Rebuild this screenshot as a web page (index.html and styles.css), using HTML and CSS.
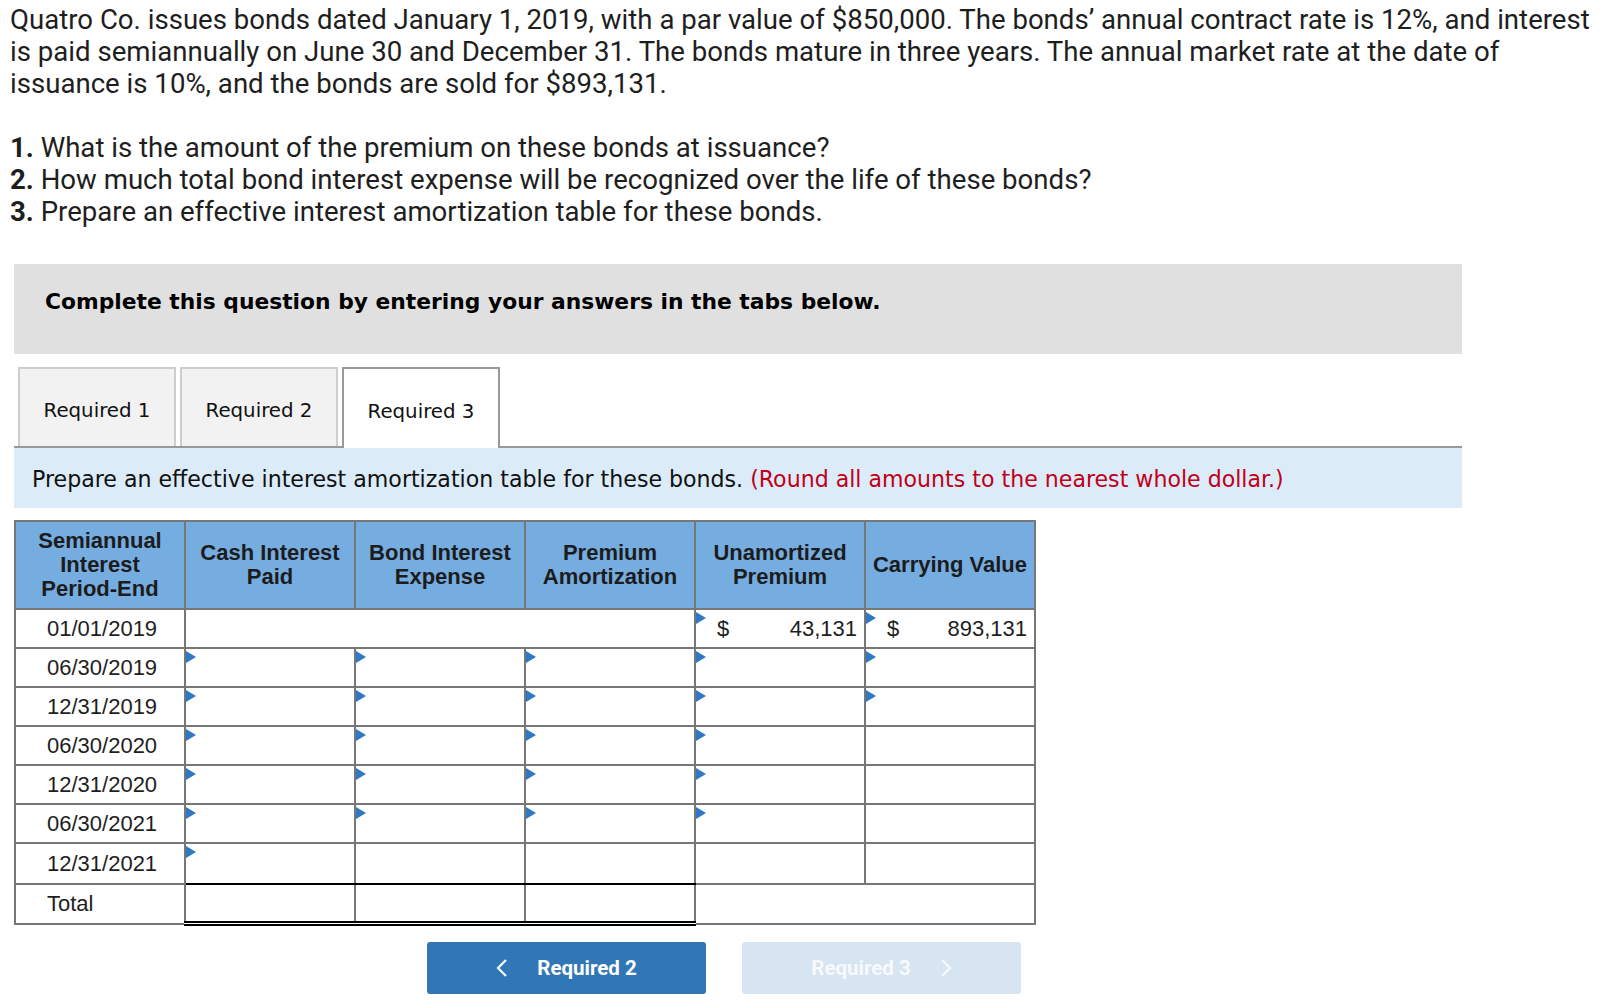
FILE: index.html
```html
<!DOCTYPE html>
<html>
<head>
<meta charset="utf-8">
<title>Quatro Co. Bonds</title>
<link rel="stylesheet" href="styles.css">
</head>
<body>
<div class="question">
  <p>Quatro Co. issues bonds dated January 1, 2019, with a par value of $850,000. The bonds’ annual contract rate is 12%, and interest<br>is paid semiannually on June 30 and December 31. The bonds mature in three years. The annual market rate at the date of<br>issuance is 10%, and the bonds are sold for $893,131.</p>
  <p><b>1.</b> What is the amount of the premium on these bonds at issuance?<br><b>2.</b> How much total bond interest expense will be recognized over the life of these bonds?<br><b>3.</b> Prepare an effective interest amortization table for these bonds.</p>
</div>

<div class="work">
  <div class="banner">Complete this question by entering your answers in the tabs below.</div>

  <div class="tabs">
    <div class="tab">Required 1</div>
    <div class="tab">Required 2</div>
    <div class="tab active">Required 3</div>
  </div>

  <div class="instruct">Prepare an effective interest amortization table for these bonds. <span class="red">(Round all amounts to the nearest whole dollar.)</span></div>

  <table class="amort">
    <colgroup><col><col><col><col><col><col></colgroup>
    <thead>
      <tr>
        <th>Semiannual<br>Interest<br>Period-End</th>
        <th>Cash Interest<br>Paid</th>
        <th>Bond Interest<br>Expense</th>
        <th>Premium<br>Amortization</th>
        <th>Unamortized<br>Premium</th>
        <th>Carrying Value</th>
      </tr>
    </thead>
    <tbody>
      <tr>
        <td class="date">01/01/2019</td>
        <td colspan="3"></td>
        <td class="in"><div class="amt"><span>$</span><span>43,131</span></div></td>
        <td class="in"><div class="amt"><span>$</span><span>893,131</span></div></td>
      </tr>
      <tr>
        <td class="date">06/30/2019</td>
        <td class="in"></td><td class="in"></td><td class="in"></td><td class="in"></td><td class="in"></td>
      </tr>
      <tr>
        <td class="date">12/31/2019</td>
        <td class="in"></td><td class="in"></td><td class="in"></td><td class="in"></td><td class="in"></td>
      </tr>
      <tr>
        <td class="date">06/30/2020</td>
        <td class="in"></td><td class="in"></td><td class="in"></td><td class="in"></td><td></td>
      </tr>
      <tr>
        <td class="date">12/31/2020</td>
        <td class="in"></td><td class="in"></td><td class="in"></td><td class="in"></td><td></td>
      </tr>
      <tr>
        <td class="date">06/30/2021</td>
        <td class="in"></td><td class="in"></td><td class="in"></td><td class="in"></td><td></td>
      </tr>
      <tr class="last">
        <td class="date">12/31/2021</td>
        <td class="in sum"></td><td class="sum"></td><td class="sum"></td><td></td><td></td>
      </tr>
      <tr class="total">
        <td class="date">Total</td>
        <td class="dbl"></td><td class="dbl"></td><td class="dbl"></td><td colspan="2"></td>
      </tr>
    </tbody>
  </table>

  <div class="nav">
    <button class="btn prev"><svg width="12" height="20" viewBox="0 0 12 20"><polyline points="10,2 2,10 10,18" fill="none" stroke="currentColor" stroke-width="2.2"/></svg><span>Required 2</span></button>
    <button class="btn next"><span>Required 3</span><svg width="12" height="20" viewBox="0 0 12 20"><polyline points="2,2 10,10 2,18" fill="none" stroke="currentColor" stroke-width="2.2"/></svg></button>
  </div>
</div>
</body>
</html>
```
FILE: styles.css
```css
html, body {
  margin: 0;
  padding: 0;
  background: #fff;
}

body {
  font-family: Roboto, "Liberation Sans", sans-serif;
  color: #1e1e1e;
}

.question {
  padding: 4px 0 0 10px;
  font-size: 27.6px;
  line-height: 32px;
}

.question p {
  margin: 0 0 32px 0;
  white-space: nowrap;
}

.question p:last-child {
  margin-bottom: 0;
}

.question b {
  font-weight: 700;
}

.work {
  margin: 36px 0 0 14px;
  width: 1448px;
}

.banner {
  background: #e0e0e0;
  height: 90px;
  box-sizing: border-box;
  padding: 24px 0 0 31px;
  font-family: "DejaVu Sans", Verdana, sans-serif;
  font-weight: 700;
  font-size: 21.8px;
  line-height: 28px;
  color: #000;
}

.tabs {
  display: flex;
  gap: 4px;
  margin-top: 13px;
  padding-left: 4px;
  border-bottom: 2px solid #999;
  height: 79px;
}

.tab {
  width: 158px;
  box-sizing: border-box;
  height: 79px;
  border: 2px solid #cdcdcd;
  border-bottom: none;
  background: #f2f2f2;
  display: flex;
  align-items: center;
  justify-content: center;
  padding-top: 6px;
  font-family: "DejaVu Sans", Verdana, sans-serif;
  font-size: 19.8px;
  color: #111;
}

.tab.active {
  background: #fff;
  border-color: #999;
  height: 81px;
  margin-bottom: -2px;
  position: relative;
}

.instruct {
  background: #dbebf8;
  height: 60px;
  box-sizing: border-box;
  padding: 17px 0 0 18px;
  font-family: "DejaVu Sans", Verdana, sans-serif;
  font-size: 22.1px;
  line-height: 28px;
  color: #111;
}

.red {
  color: #c0001a;
}

.amort {
  margin-top: 12px;
  width: 1019px;
  border-collapse: collapse;
  table-layout: fixed;
  border: 2px solid #777;
  font-family: "Liberation Sans", Arial, sans-serif;
  font-size: 22px;
  color: #1e1e1e;
}

.amort col {
  width: 170px;
}

.amort th {
  background: #75ade1;
  border: 2px solid #777;
  height: 86px;
  padding: 0;
  font-weight: 700;
  font-size: 22px;
  line-height: 24px;
  color: #1c1c1c;
  text-align: center;
  vertical-align: middle;
}

.amort td {
  border: 2px solid #777;
  height: 37px;
  padding: 0;
  vertical-align: middle;
  position: relative;
}

.amort td.date {
  padding-left: 31px;
}

.amort tr.last td {
  height: 39px;
}

.amort tr.total td {
  height: 36px;
}

.amort td.sum {
  border-bottom: 2px solid #000;
}

.amort td.dbl {
  border-bottom: 5px double #000;
}

.amort td.in::before {
  content: "";
  position: absolute;
  left: 0;
  top: 2px;
  border-left: 10px solid #2f79c4;
  border-top: 6.5px solid transparent;
  border-bottom: 6.5px solid transparent;
}

.amt {
  display: flex;
  justify-content: space-between;
  padding: 0 7px 0 21px;
}

.nav {
  display: flex;
  gap: 36px;
  margin-top: 16px;
  padding-left: 413px;
}

.btn {
  width: 279px;
  height: 52px;
  border: none;
  border-radius: 3px;
  display: flex;
  align-items: center;
  justify-content: center;
  gap: 29px;
  padding: 0;
  font-family: Roboto, "Liberation Sans", sans-serif;
  font-weight: 700;
  font-size: 20.5px;
  color: #fff;
}

.btn svg {
  display: block;
}

.prev {
  background: #3277b5;
}

.next {
  background: #d7e4f1;
  color: #f7f9fc;
}
```
